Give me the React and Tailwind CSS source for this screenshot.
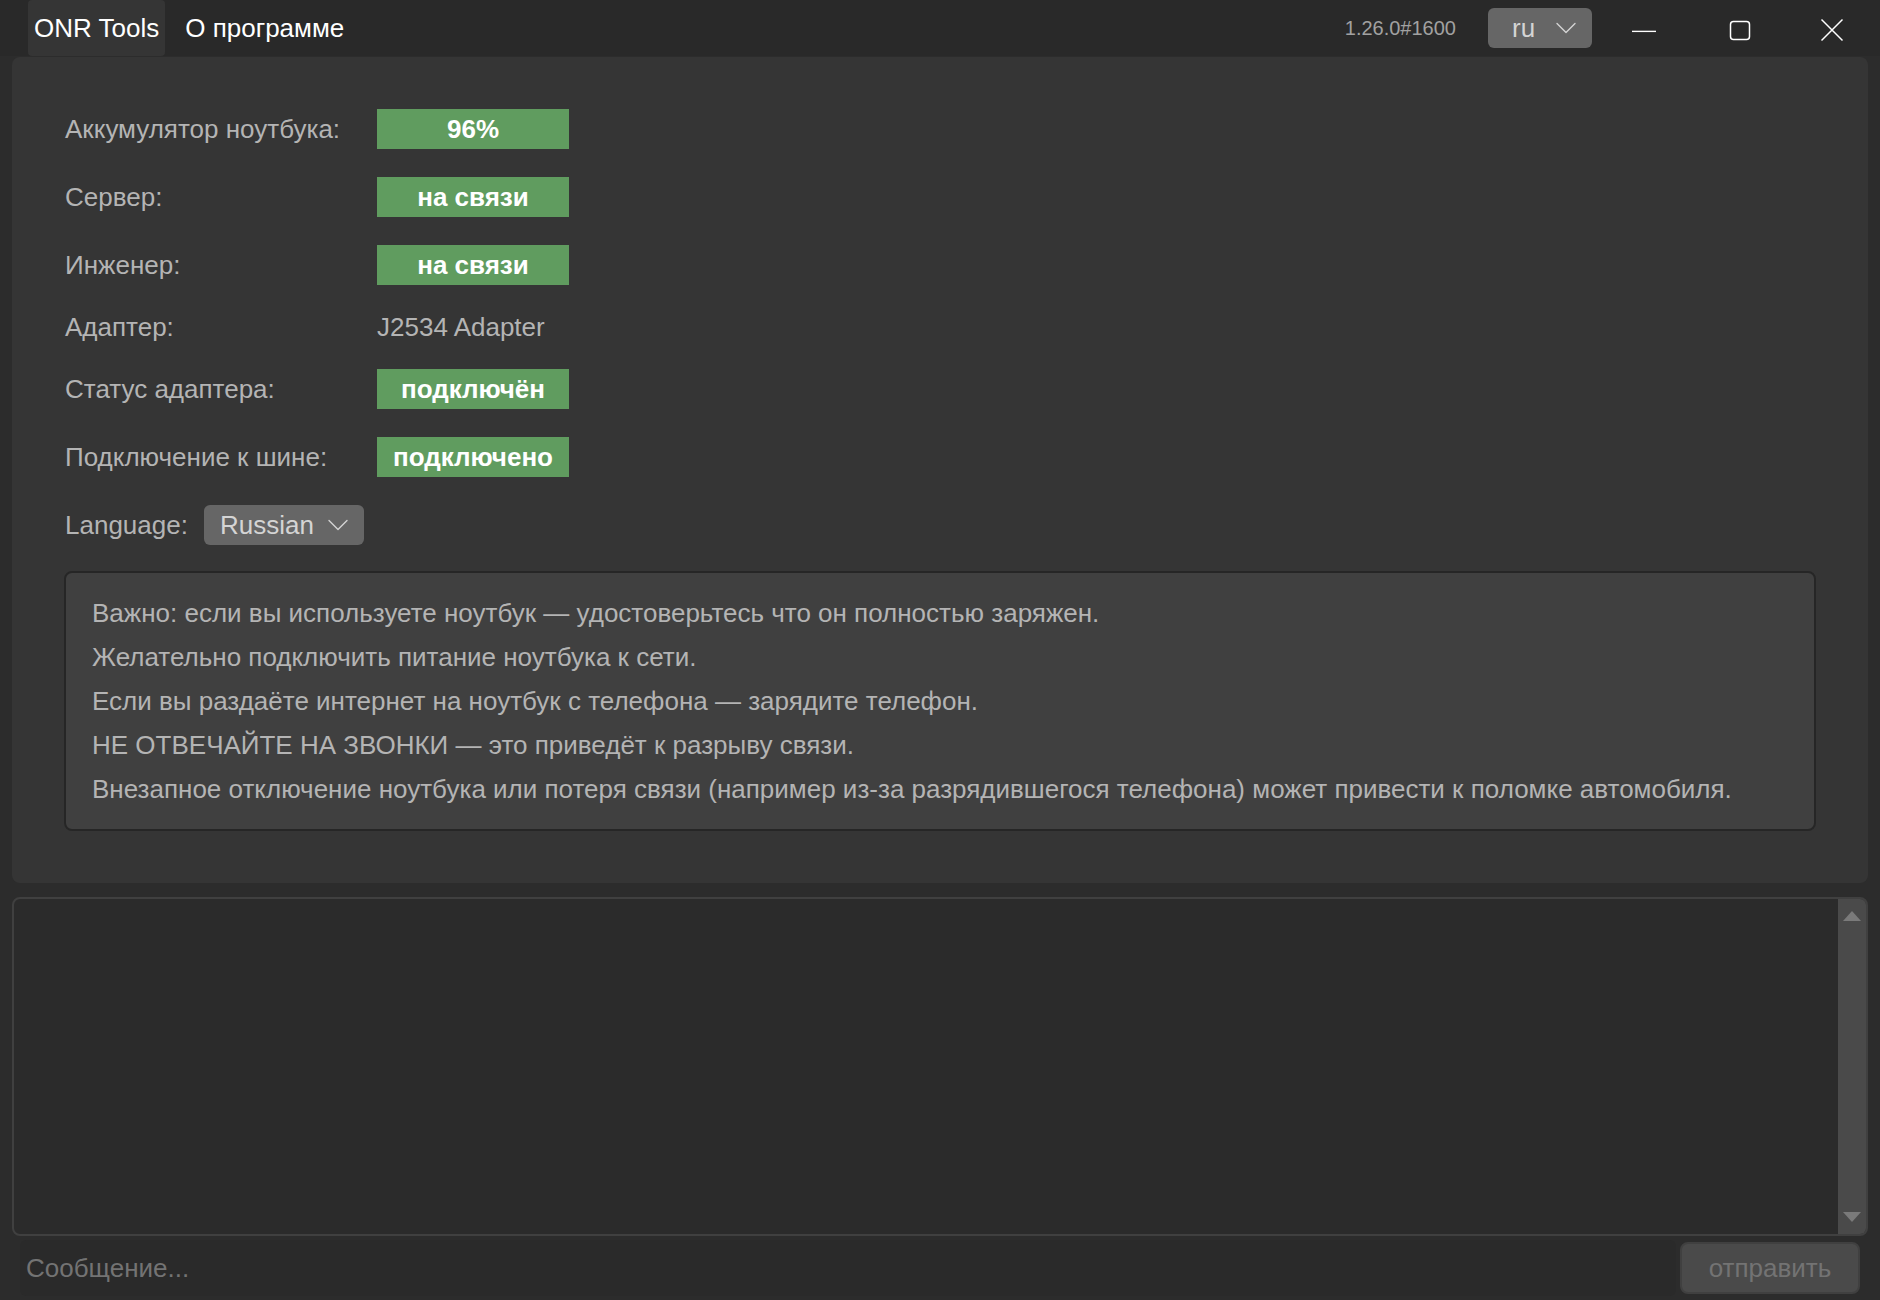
import React from "react";
import { ChevronDown } from "lucide-react";

const statusRows = [
  { label: "Аккумулятор ноутбука:", value: "96%" },
  { label: "Сервер:", value: "на связи" },
  { label: "Инженер:", value: "на связи" },
  { label: "Адаптер:", text: "J2534 Adapter" },
  { label: "Статус адаптера:", value: "подключён" },
  { label: "Подключение к шине:", value: "подключено" },
];

const notes = [
  "Важно: если вы используете ноутбук — удостоверьтесь что он полностью заряжен.",
  "Желательно подключить питание ноутбука к сети.",
  "Если вы раздаёте интернет на ноутбук с телефона — зарядите телефон.",
  "НЕ ОТВЕЧАЙТЕ НА ЗВОНКИ — это приведёт к разрыву связи.",
  "Внезапное отключение ноутбука или потеря связи (например из-за разрядившегося телефона) может привести к поломке автомобиля.",
];

const Dropdown = ({ children, className }) => (
  <div className={`flex items-center justify-between rounded-md bg-[#666666] pr-2 text-neutral-300 ${className}`}>
    <span>{children}</span>
    <ChevronDown className="size-9 shrink-0 text-neutral-300" strokeWidth={0.9} />
  </div>
);

const TitleBar = () => (
  <div className="flex h-14 items-center bg-[#292929] text-white">
    <div className="ml-7 flex h-14 items-center rounded-sm bg-[#353535] px-1.5">ONR Tools</div>
    <div className="ml-5">О программе</div>
    <div className="ml-auto text-xl text-neutral-400">1.26.0#1600</div>
    <Dropdown className="ml-8 h-10 w-26 pl-6">ru</Dropdown>
    <div className="ml-10 flex w-6 justify-center pt-1">
      <svg width="26" height="24" viewBox="0 0 26 24" fill="none" stroke="currentColor" strokeWidth="1.5">
        <path d="M0 13.5h26" />
      </svg>
    </div>
    <div className="ml-18 flex w-6 justify-center pt-1">
      <svg width="22" height="22" viewBox="0 0 22 22" fill="none" stroke="currentColor" strokeWidth="1.5">
        <rect x="1.5" y="2.5" width="19" height="18" rx="3" />
      </svg>
    </div>
    <div className="mr-9 ml-17 flex w-6 justify-center pt-1">
      <svg width="24" height="24" viewBox="0 0 24 24" fill="none" stroke="currentColor" strokeWidth="1.5">
        <path d="M1.5 1.5l21 21M22.5 1.5l-21 21" />
      </svg>
    </div>
  </div>
);

const StatusPanel = () => (
  <div className="mx-3 mt-px flex flex-col gap-7 rounded-lg bg-[#353535] px-13 pt-13 pb-13 text-[#b4b4b4]">
    {statusRows.map((row) =>
      row.value ? (
        <div key={row.label} className="flex h-10 items-center pl-px">
          <span className="w-78">{row.label}</span>
          <span className="flex h-10 w-48 items-center justify-center bg-[#609c5f] font-bold text-white">
            {row.value}
          </span>
        </div>
      ) : (
        <div key={row.label} className="flex h-7 items-center pl-px">
          <span className="w-78">{row.label}</span>
          <span>{row.text}</span>
        </div>
      )
    )}
    <div className="flex h-10 items-center gap-4 pl-px">
      <span>Language:</span>
      <Dropdown className="h-10 w-40 pl-4">Russian</Dropdown>
    </div>
    <div className="-mt-0.5 rounded-lg border-2 border-neutral-800 bg-neutral-700 py-4.5 pr-6 pl-6.5 leading-11">
      {notes.map((line) => (
        <div key={line}>{line}</div>
      ))}
    </div>
  </div>
);

const ChatLog = () => (
  <div className="mx-3 mt-3.5 flex min-h-0 flex-1 overflow-hidden rounded-lg border-2 border-neutral-700 bg-[#2b2b2b]">
    <div className="flex-1" />
    <div className="flex w-7 flex-col items-center justify-between bg-[#4a4a4a] py-3">
      <svg width="18" height="10" viewBox="0 0 18 10" fill="#7a7a7a">
        <path d="M9 0l9 10H0z" />
      </svg>
      <svg width="18" height="10" viewBox="0 0 18 10" fill="#7a7a7a">
        <path d="M0 0h18L9 10z" />
      </svg>
    </div>
  </div>
);

const MessageBar = () => (
  <div className="flex h-16 items-center gap-1 pr-5 pl-5">
    <input
      readOnly
      placeholder="Сообщение..."
      className="h-14 min-w-0 flex-1 rounded-md bg-[#2a2a2a] px-1.5 outline-none placeholder:text-neutral-500"
    />
    <button className="h-13 w-45 rounded-lg border-2 border-neutral-700 bg-[#4a4a4a] text-neutral-500">
      отправить
    </button>
  </div>
);

export default function App() {
  return (
    <div className="flex h-screen flex-col overflow-hidden bg-[#2c2c2c] font-['Liberation_Sans',Arial,sans-serif] text-[26px]">
      <TitleBar />
      <StatusPanel />
      <ChatLog />
      <MessageBar />
    </div>
  );
}
